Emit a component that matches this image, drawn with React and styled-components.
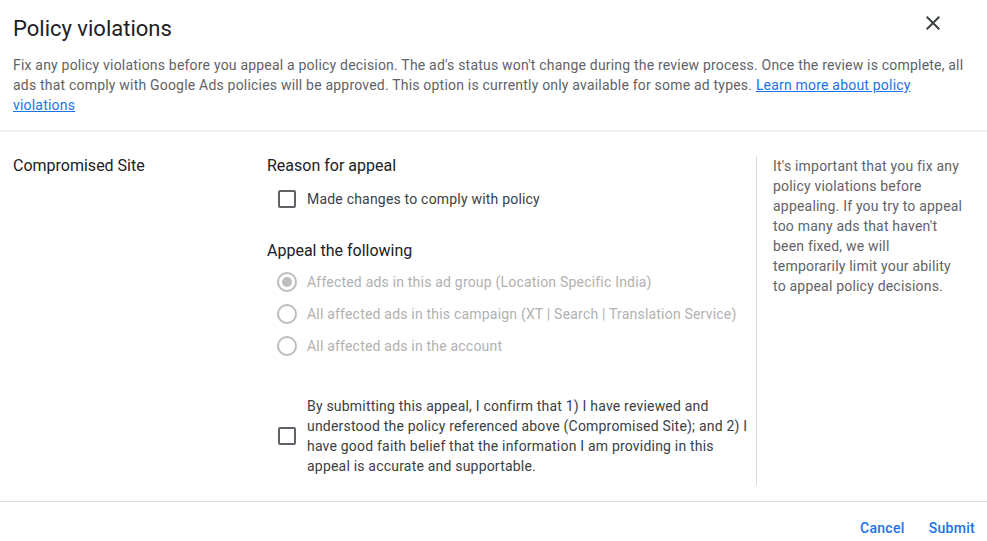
import React, { useState } from 'react';
import styled, { createGlobalStyle } from 'styled-components';

const GlobalStyle = createGlobalStyle`
  html, body {
    margin: 0;
    padding: 0;
    background: #ffffff;
    font-family: Roboto, "Liberation Sans", Arial, sans-serif;
    color: #202124;
  }
  * { box-sizing: border-box; }
`;

const Dialog = styled.div`
  width: 987px;
  height: 541px;
  display: flex;
  flex-direction: column;
  background: #fff;
  overflow: hidden;
`;

const Header = styled.div`
  padding: 15px 22px 15px 13px;
  border-bottom: 1px solid #ececec;
  box-shadow: 0 1px 1px rgba(0, 0, 0, 0.04);
`;

const TitleRow = styled.div`
  display: flex;
  justify-content: space-between;
  align-items: flex-start;
`;

const Title = styled.h1`
  margin: 0;
  font-size: 22px;
  line-height: 28px;
  font-weight: 400;
  color: #202124;
`;

const CloseButton = styled.button`
  border: none;
  background: none;
  padding: 0;
  margin: -4px 20px 0 0;
  width: 24px;
  height: 24px;
  cursor: pointer;
  color: #3c4043;
  svg { display: block; }
`;

const Description = styled.p`
  margin: 12px 0 0;
  font-size: 14px;
  line-height: 20px;
  color: #5f6368;
  letter-spacing: 0.2px;
`;

const Link = styled.a`
  color: #1a73e8;
  text-decoration: underline;
`;

const Body = styled.div`
  display: grid;
  grid-template-columns: 254px 489px 1fr;
  padding: 24px 0 0 13px;
  flex: 0 0 auto;
`;

const PolicyName = styled.div`
  font-size: 16px;
  line-height: 22px;
  color: #202124;
`;

const Form = styled.div`
  display: flex;
  flex-direction: column;
  padding-bottom: 9px;
`;

const SectionTitle = styled.div`
  font-size: 16px;
  line-height: 22px;
  color: #202124;
  margin-top: ${p => p.$top || 0}px;
`;

const OptionRow = styled.label`
  display: flex;
  align-items: center;
  gap: 11px;
  padding-left: 11px;
  height: ${p => p.$h}px;
  margin-top: ${p => p.$top || 0}px;
  font-size: 14px;
  line-height: 20px;
  color: ${p => (p.$disabled ? '#b1b1b1' : '#3c4043')};
  letter-spacing: 0.2px;
`;

const Box = styled.span`
  flex: 0 0 18px;
  width: 18px;
  height: 18px;
  border: 2px solid #5f6368;
  border-radius: 2px;
`;

const Radio = styled.span`
  flex: 0 0 20px;
  width: 20px;
  height: 20px;
  margin-left: -1px;
  margin-right: -1px;
  border: 2px solid #bdbdbd;
  border-radius: 50%;
  display: flex;
  align-items: center;
  justify-content: center;

  &::after {
    content: '';
    width: 10px;
    height: 10px;
    border-radius: 50%;
    background: ${p => (p.$checked ? '#bdbdbd' : 'transparent')};
  }
`;

const ConfirmText = styled.span`
  max-width: 445px;
`;

const Aside = styled.div`
  border-left: 1px solid #dadce0;
  padding: 0 23px 0 16px;
  font-size: 14px;
  line-height: 20px;
  color: #5f6368;
  letter-spacing: 0.2px;
  margin-top: 1px;
`;

const Footer = styled.div`
  margin-top: 16px;
  border-top: 1px solid #dadce0;
  display: flex;
  justify-content: flex-end;
  padding: 8px 0 0;
`;

const TextButton = styled.button`
  border: none;
  background: none;
  font-family: inherit;
  font-size: 14px;
  font-weight: 500;
  letter-spacing: 0.3px;
  color: #1a73e8;
  height: 36px;
  padding: 0 12px;
  cursor: pointer;
`;

const appealOptions = [
  'Affected ads in this ad group (Location Specific India)',
  'All affected ads in this campaign (XT | Search | Translation Service)',
  'All affected ads in the account',
];

export default function App() {
  const [selected] = useState(0);

  return (
    <>
      <GlobalStyle />
      <Dialog>
        <Header>
          <TitleRow>
            <Title>Policy violations</Title>
            <CloseButton aria-label="Close">
              <svg width="24" height="24" viewBox="0 0 24 24" fill="currentColor">
                <path d="M19 6.41L17.59 5 12 10.59 6.41 5 5 6.41 10.59 12 5 17.59 6.41 19 12 13.41 17.59 19 19 17.59 13.41 12z" />
              </svg>
            </CloseButton>
          </TitleRow>
          <Description>
            Fix any policy violations before you appeal a policy decision. The ad's status won't change during the
            review process. Once the review is complete, all ads that comply with Google Ads policies will be
            approved. This option is currently only available for some ad types.{' '}
            <Link href="#">Learn more about policy violations</Link>
          </Description>
        </Header>

        <Body>
          <PolicyName>Compromised Site</PolicyName>
          <Form>
            <SectionTitle>Reason for appeal</SectionTitle>
            <OptionRow $h={40} $top={2}>
              <Box />
              Made changes to comply with policy
            </OptionRow>
            <SectionTitle $top={21}>Appeal the following</SectionTitle>
            {appealOptions.map((label, i) => (
              <OptionRow key={label} $h={32} $top={i === 0 ? 4 : 0} $disabled>
                <Radio $checked={i === selected} />
                {label}
              </OptionRow>
            ))}
            <OptionRow $h={80} $top={34}>
              <Box />
              <ConfirmText>
                By submitting this appeal, I confirm that 1) I have reviewed and understood the policy referenced
                above (Compromised Site); and 2) I have good faith belief that the information I am providing in
                this appeal is accurate and supportable.
              </ConfirmText>
            </OptionRow>
          </Form>
          <Aside>
            It's important that you fix any policy violations before appealing. If you try to appeal too many ads
            that haven't been fixed, we will temporarily limit your ability to appeal policy decisions.
          </Aside>
        </Body>

        <Footer>
          <TextButton>Cancel</TextButton>
          <TextButton>Submit</TextButton>
        </Footer>
      </Dialog>
    </>
  );
}
